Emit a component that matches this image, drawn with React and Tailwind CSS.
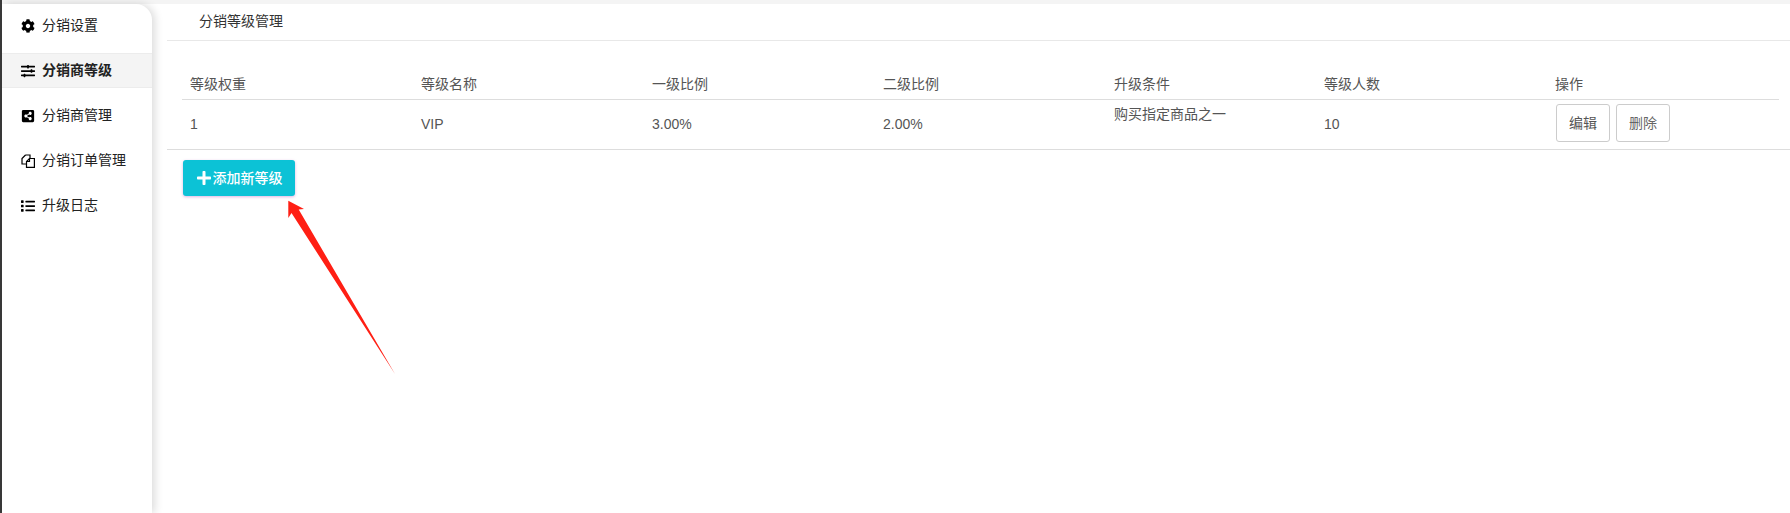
import React from "react";
import { FaCog, FaSlidersH, FaShareAltSquare, FaList, FaPlus } from "react-icons/fa";

// fa-files-o is not in the package, so it is drawn here
function FilesIcon({ className }) {
  return (
    <svg viewBox="0 0 14 14" fill="none" stroke="currentColor" strokeWidth="1.2" className={className}>
      <path d="M4.5 1H9V4.5M4.5 1L1 4.5V10H5" />
      <path d="M8.5 4.5H13.4V13.4H5.5V7.5Z" />
      <path d="M8.5 4.5V7.5H5.5" />
    </svg>
  );
}

const menu = [
  { label: "分销设置", icon: FaCog },
  { label: "分销商等级", icon: FaSlidersH, active: true },
  { label: "分销商管理", icon: FaShareAltSquare },
  { label: "分销订单管理", icon: FilesIcon },
  { label: "升级日志", icon: FaList },
];

const columns = [
  { title: "等级权重", width: "w-[231px]" },
  { title: "等级名称", width: "w-[231px]" },
  { title: "一级比例", width: "w-[231px]" },
  { title: "二级比例", width: "w-[231px]" },
  { title: "升级条件", width: "w-[210px]" },
  { title: "等级人数", width: "w-[231px]" },
  { title: "操作", width: "" },
];

const font = "font-['Liberation_Sans','Noto_Sans_CJK_SC',sans-serif]";

export default function App() {
  return (
    <div className={`${font} relative flex h-[513px] w-[1790px] overflow-hidden bg-white text-sm`}>
      <div className="w-[2px] shrink-0 bg-[#3a3a3a]" />
      <div className="flex min-w-0 flex-1 flex-col">
        <div className="h-[4px] shrink-0 bg-[#f4f4f4]" />
        <div className="flex min-h-0 flex-1">
          {/* Sidebar */}
          <aside className="z-10 flex w-[150px] shrink-0 flex-col gap-[10px] rounded-tr-[16px] bg-white pt-[4px] shadow-[3px_0_8px_rgba(0,0,0,0.14)]">
            {menu.map((m) => (
              <div
                key={m.label}
                className={`flex h-[35px] items-center gap-[7px] pl-[19px] text-[#222] ${
                  m.active ? "border-y border-[#ececec] bg-[#f4f4f4] font-bold" : ""
                }`}
              >
                <m.icon className="h-[14px] w-[14px] text-black" />
                <span className="pb-[2px]">{m.label}</span>
              </div>
            ))}
          </aside>

          {/* Content */}
          <main className="min-w-0 flex-1 pl-[15px]">
            <div className="flex h-[37px] items-center border-b border-[#e8e8e8] pb-[3px] pl-[32px] text-[#333]">
              分销等级管理
            </div>
            <div className="mt-[27px] border-b border-[#ddd] pl-[15px] pr-[11px]">
              <table className="w-full table-fixed text-left text-[#555]">
                <thead>
                  <tr className="border-b border-[#ddd]">
                    {columns.map((c) => (
                      <th key={c.title} className={`${c.width} h-[31px] px-2 pt-[2px] font-normal`}>
                        {c.title}
                      </th>
                    ))}
                  </tr>
                </thead>
                <tbody>
                  <tr className="h-[50px]">
                    <td className="px-2">1</td>
                    <td className="px-2">VIP</td>
                    <td className="px-2">3.00%</td>
                    <td className="px-2">2.00%</td>
                    <td className="px-2 pt-[4px] align-top">购买指定商品之一</td>
                    <td className="px-2">10</td>
                    <td className="px-2 pb-[2px]">
                      <div className="ml-[1px] flex gap-[6px]">
                        <button className="h-[38px] w-[54px] rounded-[3px] border border-[#ccc] bg-white text-[#555]">
                          编辑
                        </button>
                        <button className="h-[38px] w-[54px] rounded-[3px] border border-[#ccc] bg-white text-[#666]">
                          删除
                        </button>
                      </div>
                    </td>
                  </tr>
                </tbody>
              </table>
            </div>
            <div className="ml-[16px] mt-[10px]">
              <button className="flex h-[36px] w-[112px] items-center justify-center gap-[1px] rounded-[3px] bg-[#0cc2d6] font-medium text-white shadow-[0_1px_3px_rgba(156,39,176,0.35)]">
                <FaPlus className="h-[16px] w-[16px]" />
                <span>添加新等级</span>
              </button>
            </div>
          </main>
        </div>
      </div>

      {/* Annotation arrow */}
      <svg className="absolute left-0 top-0 h-[513px] w-[1790px]" viewBox="0 0 1790 513" fill="none">
        <polygon
          points="288.3,200.7 304,209 298.7,209.5 395,374 291.5,213 288.3,218"
          fill="#ff1f14"
        />
      </svg>
    </div>
  );
}
